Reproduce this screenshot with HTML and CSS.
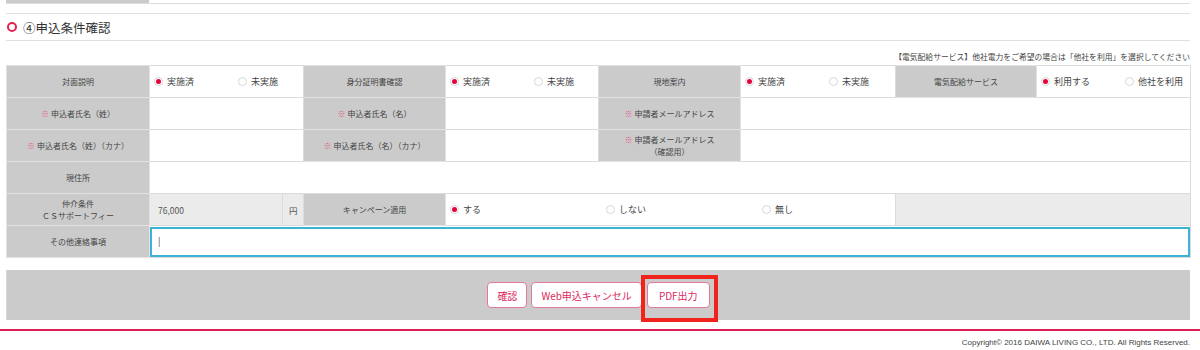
FILE: index.html
```html
<!DOCTYPE html>
<html lang="ja">

<head>
    <meta charset="UTF-8">
    <title>申込条件確認</title>
    <link rel="stylesheet" href="styles.css">
</head>

<body>

    <div class="wrap">
        <!-- 前のセクションの最終行 -->
        <div class="prev-row">
            <div class="prev-label"></div>
        </div>

        <h2 class="section-title"><span class="ring"></span>④申込条件確認</h2>

        <p class="note">【電気配給サービス】他社電力をご希望の場合は「他社を利用」を選択してください</p>

        <table class="form-table">
            <colgroup>
                <col style="width:143px">
                <col style="width:133px">
                <col style="width:21px">
                <col style="width:142px">
                <col style="width:153px">
                <col style="width:142px">
                <col style="width:155px">
                <col style="width:141px">
                <col style="width:154px">
            </colgroup>
            <tr>
                <th>対面説明</th>
                <td colspan="2">
                    <div class="radios">
                        <label class="opt"><span class="radio checked"></span>実施済</label>
                        <label class="opt"><span class="radio"></span>未実施</label>
                    </div>
                </td>
                <th>身分証明書確認</th>
                <td>
                    <div class="radios">
                        <label class="opt"><span class="radio checked"></span>実施済</label>
                        <label class="opt"><span class="radio"></span>未実施</label>
                    </div>
                </td>
                <th>現地案内</th>
                <td>
                    <div class="radios">
                        <label class="opt"><span class="radio checked"></span>実施済</label>
                        <label class="opt"><span class="radio"></span>未実施</label>
                    </div>
                </td>
                <th>電気配給サービス</th>
                <td>
                    <div class="radios">
                        <label class="opt"><span class="radio checked"></span>利用する</label>
                        <label class="opt"><span class="radio"></span>他社を利用</label>
                    </div>
                </td>
            </tr>
            <tr>
                <th><span class="req">※</span> 申込者氏名（姓）</th>
                <td colspan="2"></td>
                <th><span class="req">※</span> 申込者氏名（名）</th>
                <td></td>
                <th><span class="req">※</span> 申請者メールアドレス</th>
                <td colspan="3"></td>
            </tr>
            <tr>
                <th><span class="req">※</span> 申込者氏名（姓）（カナ）</th>
                <td colspan="2"></td>
                <th><span class="req">※</span> 申込者氏名（名）（カナ）</th>
                <td></td>
                <th><span class="req">※</span> 申請者メールアドレス<br>（確認用）</th>
                <td colspan="3"></td>
            </tr>
            <tr>
                <th>現住所</th>
                <td colspan="8"></td>
            </tr>
            <tr>
                <th>仲介条件<br>ＣＳサポートフィー</th>
                <td class="fixed">76,000</td>
                <td class="fixed unit">円</td>
                <th>キャンペーン適用</th>
                <td colspan="3">
                    <div class="radios wide">
                        <label class="opt"><span class="radio checked"></span>する</label>
                        <label class="opt"><span class="radio"></span>しない</label>
                        <label class="opt"><span class="radio"></span>無し</label>
                    </div>
                </td>
                <td class="fixed" colspan="2"></td>
            </tr>
            <tr>
                <th>その他連絡事項</th>
                <td colspan="8" class="input-cell">
                    <div class="text-input">|</div>
                </td>
            </tr>
        </table>

        <div class="button-bar">
            <button class="btn">確認</button>
            <button class="btn">Web申込キャンセル</button>
            <span class="marked">
                <button class="btn">PDF出力</button>
                <span class="highlight"></span>
            </span>
        </div>
    </div>

    <footer>
        <p>Copyright© 2016 DAIWA LIVING CO., LTD. All Rights Reserved.</p>
    </footer>

</body>

</html>
```

FILE: styles.css
```css
* {
    margin: 0;
    padding: 0;
    box-sizing: border-box;
}

body {
    font-family: 'Noto Sans CJK JP', 'Noto Sans', sans-serif;
    background-color: #fff;
    color: #444;
}

.wrap {
    padding: 0 10px 0 6px;
}

.prev-row {
    height: 4px;
    border-bottom: 1px solid #dcdcdc;
}

.prev-label {
    width: 143px;
    height: 3px;
    background-color: #cbcbcb;
}

.section-title {
    margin-top: 9px;
    height: 28px;
    border-top: 1px solid #e0e0e0;
    border-bottom: 1px solid #e0e0e0;
    display: flex;
    align-items: center;
    gap: 6px;
    font-size: 12.5px;
    font-weight: 400;
    color: #333;
    padding-left: 1px;
}

.ring {
    width: 10px;
    height: 10px;
    border: 2.5px solid #e2224f;
    border-radius: 50%;
}

.note {
    margin: 10px 0 2px;
    font-size: 7.8px;
    line-height: 12px;
    text-align: right;
    color: #444;
}

.form-table {
    width: 1184px;
    table-layout: fixed;
    border-collapse: collapse;
}

.form-table th,
.form-table td {
    height: 32px;
    border: 1px solid #dcdcdc;
    padding: 0;
    vertical-align: middle;
}

.form-table th {
    background-color: #cbcbcb;
    font-size: 8px;
    font-weight: 400;
    line-height: 12px;
    color: #444;
    text-align: center;
    border-color: #e2e2e2;
}

.req {
    color: #e8507a;
}

.form-table td.fixed {
    background-color: #ebebeb;
    font-size: 8.5px;
    color: #555;
    padding-left: 8px;
}

.form-table td.unit {
    padding-left: 6px;
}

.radios {
    display: flex;
    align-items: center;
    padding-left: 4px;
}

.opt {
    flex-shrink: 0;
    width: 84px;
    display: flex;
    align-items: center;
    gap: 4px;
    font-size: 9px;
    color: #444;
}

.radios.wide .opt {
    width: 156px;
}

.radios .opt:last-child {
    width: auto;
}

.radio {
    width: 9px;
    height: 9px;
    border: 1px solid #d6d6d6;
    border-radius: 50%;
    background-color: #fff;
    display: flex;
    align-items: center;
    justify-content: center;
}

.radio.checked::after {
    content: "";
    width: 5px;
    height: 5px;
    border-radius: 50%;
    background-color: #e8003c;
}

.form-table td.input-cell {
    padding: 0;
}

.text-input {
    height: 30px;
    border: 2px solid #3ab3d4;
    font-size: 9px;
    line-height: 26px;
    padding-left: 6px;
    color: #444;
}

.button-bar {
    margin-top: 12px;
    height: 50px;
    background-color: #cbcbcb;
    border-left: 1px solid #d8d8d8;
    display: flex;
    align-items: center;
    justify-content: center;
    gap: 4px;
}

.btn {
    height: 26px;
    padding: 0 9px;
    background-color: #fff;
    border: 1px solid #e07a96;
    border-radius: 4px;
    color: #db2a5e;
    font-family: 'Noto Sans CJK JP', sans-serif;
    font-size: 10px;
}

.marked {
    position: relative;
    display: inline-flex;
    margin-left: 1px;
}

.marked .btn {
    padding: 0 11px;
}

.highlight {
    position: absolute;
    left: -6px;
    top: -7px;
    width: 77px;
    height: 47px;
    border: 4px solid #f0241c;
}

footer {
    margin-top: 9px;
    border-top: 2px solid #dc1e50;
    padding: 7px 10px 0 0;
    text-align: right;
}

footer p {
    font-family: 'Liberation Sans', sans-serif;
    font-size: 8px;
    color: #444;
}
```
